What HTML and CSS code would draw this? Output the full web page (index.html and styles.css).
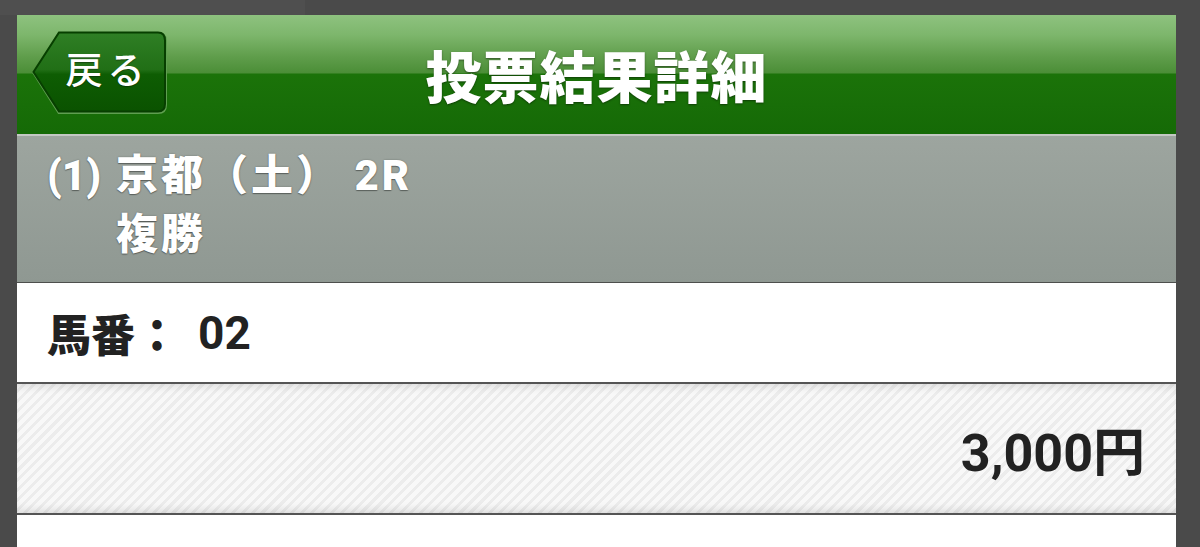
FILE: index.html
```html
<!DOCTYPE html>
<html lang="ja">
<head>
<meta charset="utf-8">
<title>投票結果詳細</title>
<link rel="stylesheet" href="styles.css">
</head>
<body>
<div class="topbar"><div class="topbar-left"></div></div>
<div class="screen">
  <header class="header">
    <a class="back" href="#">
      <svg class="back-shape" width="136" height="84" viewBox="0 0 136 84">
        <defs>
          <linearGradient id="bg" x1="0" y1="0" x2="0" y2="1">
            <stop offset="0" stop-color="#2f7f25"/>
            <stop offset="0.47" stop-color="#216f16"/>
            <stop offset="0.53" stop-color="#0e5d03"/>
            <stop offset="1" stop-color="#0a5200"/>
          </linearGradient>
        </defs>
        <path d="M27 2.5 H126 Q133.5 2.5 133.5 10 V74 Q133.5 81.5 126 81.5 H27 L2 42 Z" fill="none" stroke="#5f9e50" stroke-width="3"/>
        <path d="M27 1.5 H126 Q133 1.5 133 9.5 V73 Q133 80.5 126 80.5 H27 L1.5 41 Z" fill="url(#bg)" stroke="#073f00" stroke-width="2"/>
      </svg>
      <span class="back-label">戻る</span>
    </a>
    <h1 class="title">投票結果詳細</h1>
    <span class="spacer"></span>
  </header>
  <section class="race">
    <span class="race-no">(1)</span>
    <div class="race-info">
      <div class="race-line">京都（土） 2R</div>
      <div class="race-line">複勝</div>
    </div>
  </section>
  <div class="row row-horse">馬番：<span class="horse-no">02</span></div>
  <div class="row row-amount">3,000円</div>
  <div class="row row-empty"></div>
</div>
</body>
</html>
```
FILE: styles.css
```css
html, body {
  margin: 0;
  padding: 0;
}
body {
  background: #4a4a4a;
  width: 1200px;
  height: 547px;
  overflow: hidden;
  font-family: "Roboto", "Noto Sans CJK JP", sans-serif;
}
.topbar {
  height: 15px;
  display: flex;
}
.topbar-left {
  width: 305px;
  background: #4f4f4f;
}
.screen {
  margin-left: 17px;
  width: 1159px;
  background: #ffffff;
  height: 532px;
}
.header {
  height: 119px;
  border-bottom: 2px solid #c4c8c4;
  background: linear-gradient(to bottom,
    #8ec27f 0px,
    #7db66c 20px,
    #5f9d4b 42px,
    #4b8e37 58px,
    #1b7309 59px,
    #186e08 90px,
    #156a06 119px);
  display: grid;
  grid-template-columns: 1fr auto 1fr;
  align-items: center;
}
.back {
  position: relative;
  justify-self: start;
  margin-left: 15px;
  margin-top: -3px;
  width: 136px;
  height: 84px;
  display: flex;
  align-items: center;
  justify-content: center;
  padding-left: 10px;
  box-sizing: border-box;
  text-decoration: none;
}
.back-shape {
  position: absolute;
  left: 0;
  top: 0;
}
.back-label {
  position: relative;
  color: #ffffff;
  font-size: 37px;
  font-weight: 500;
  letter-spacing: 5px;
  margin-right: -5px;
  line-height: 1;
  margin-top: -4px;
  text-shadow: 0 1px 1px rgba(0, 0, 0, 0.35);
}
.title {
  margin: 8px 0 0 0;
  color: #ffffff;
  font-size: 56px;
  font-weight: 900;
  letter-spacing: 1px;
  line-height: 1;
  text-shadow: 0 1px 2px rgba(0, 0, 0, 0.45);
}
.race {
  display: flex;
  padding: 10px 0 18px 30px;
  background: linear-gradient(to bottom, #9da59f, #8f9892);
  border-bottom: 1px solid #4d4f4d;
  color: #ffffff;
  font-size: 42px;
  font-weight: 900;
  line-height: 59px;
  text-shadow: 0 0 2px rgba(0, 0, 0, 0.3), 0 1px 1px rgba(0, 0, 0, 0.35);
}
.race-no {
  width: 69px;
  flex: none;
}
.race-line {
  letter-spacing: 3px;
}
.row {
  display: flex;
  align-items: center;
  box-sizing: border-box;
  color: #222222;
  font-weight: 700;
}
.row-horse {
  height: 101px;
  padding-left: 30px;
  font-size: 44px;
  font-weight: 900;
  border-bottom: 2px solid #555555;
  background: #ffffff;
}
.horse-no {
  margin-left: 19px;
  font-size: 46px;
  font-weight: 700;
}
.row-amount {
  height: 131px;
  justify-content: flex-end;
  padding-right: 31px;
  font-size: 52px;
  border-bottom: 2px solid #555555;
  background-color: #f7f7f7;
  background-image: repeating-linear-gradient(135deg,
    #f8f8f8 0px, #f8f8f8 4px, #ececec 4px, #ececec 7px);
  box-shadow: inset 0 8px 10px -6px rgba(0, 0, 0, 0.12),
              inset 0 -8px 10px -6px rgba(0, 0, 0, 0.14);
}
.row-empty {
  height: 40px;
  background: #ffffff;
}
```
